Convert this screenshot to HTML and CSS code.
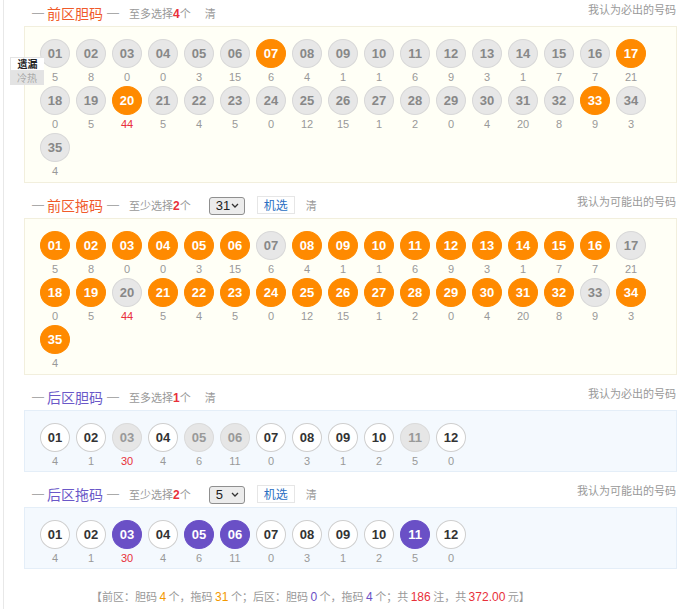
FILE: index.html
```html
<!DOCTYPE html>
<html lang="zh-CN">
<head>
<meta charset="utf-8">
<title>胆拖选号</title>
<link rel="stylesheet" href="styles.css">
</head>
<body>
<div class="page">
  <div class="mode-tabs">
    <div class="mode-tab active">遗漏</div>
    <div class="mode-tab">冷热</div>
  </div>

  <section class="zone">
    <div class="zone-head">
      <div class="zone-left">
        <span class="dash">—</span><span class="zone-title front">前区胆码</span><span class="dash">—</span>
        <span class="hint">至多选择<b>4</b>个</span>
        <span class="clear">清</span>
      </div>
      <div class="zone-note">我认为必出的号码</div>
    </div>
    <div class="box front-box">
      <div class="ball-grid">
        <div class="cell"><span class="ball gray">01</span><span class="miss">5</span></div>
        <div class="cell"><span class="ball gray">02</span><span class="miss">8</span></div>
        <div class="cell"><span class="ball gray">03</span><span class="miss">0</span></div>
        <div class="cell"><span class="ball gray">04</span><span class="miss">0</span></div>
        <div class="cell"><span class="ball gray">05</span><span class="miss">3</span></div>
        <div class="cell"><span class="ball gray">06</span><span class="miss">15</span></div>
        <div class="cell"><span class="ball orange">07</span><span class="miss">6</span></div>
        <div class="cell"><span class="ball gray">08</span><span class="miss">4</span></div>
        <div class="cell"><span class="ball gray">09</span><span class="miss">1</span></div>
        <div class="cell"><span class="ball gray">10</span><span class="miss">1</span></div>
        <div class="cell"><span class="ball gray">11</span><span class="miss">6</span></div>
        <div class="cell"><span class="ball gray">12</span><span class="miss">9</span></div>
        <div class="cell"><span class="ball gray">13</span><span class="miss">3</span></div>
        <div class="cell"><span class="ball gray">14</span><span class="miss">1</span></div>
        <div class="cell"><span class="ball gray">15</span><span class="miss">7</span></div>
        <div class="cell"><span class="ball gray">16</span><span class="miss">7</span></div>
        <div class="cell"><span class="ball orange">17</span><span class="miss">21</span></div>
        <div class="cell"><span class="ball gray">18</span><span class="miss">0</span></div>
        <div class="cell"><span class="ball gray">19</span><span class="miss">5</span></div>
        <div class="cell"><span class="ball orange">20</span><span class="miss hot">44</span></div>
        <div class="cell"><span class="ball gray">21</span><span class="miss">5</span></div>
        <div class="cell"><span class="ball gray">22</span><span class="miss">4</span></div>
        <div class="cell"><span class="ball gray">23</span><span class="miss">5</span></div>
        <div class="cell"><span class="ball gray">24</span><span class="miss">0</span></div>
        <div class="cell"><span class="ball gray">25</span><span class="miss">12</span></div>
        <div class="cell"><span class="ball gray">26</span><span class="miss">15</span></div>
        <div class="cell"><span class="ball gray">27</span><span class="miss">1</span></div>
        <div class="cell"><span class="ball gray">28</span><span class="miss">2</span></div>
        <div class="cell"><span class="ball gray">29</span><span class="miss">0</span></div>
        <div class="cell"><span class="ball gray">30</span><span class="miss">4</span></div>
        <div class="cell"><span class="ball gray">31</span><span class="miss">20</span></div>
        <div class="cell"><span class="ball gray">32</span><span class="miss">8</span></div>
        <div class="cell"><span class="ball orange">33</span><span class="miss">9</span></div>
        <div class="cell"><span class="ball gray">34</span><span class="miss">3</span></div>
        <div class="cell"><span class="ball gray">35</span><span class="miss">4</span></div>
      </div>
    </div>
  </section>

  <section class="zone">
    <div class="zone-head">
      <div class="zone-left">
        <span class="dash">—</span><span class="zone-title front">前区拖码</span><span class="dash">—</span>
        <span class="hint">至少选择<b>2</b>个</span>
        <span class="select-wrap">
          <select class="count-select"><option>31</option></select>
          <svg class="chev" width="8" height="5" viewBox="0 0 8 5"><path d="M1 1l3 3 3-3" fill="none" stroke="#333" stroke-width="1.3"/></svg>
        </span>
        <span class="pick-btn">机选</span>
        <span class="clear near">清</span>
      </div>
      <div class="zone-note">我认为可能出的号码</div>
    </div>
    <div class="box front-box">
      <div class="ball-grid">
        <div class="cell"><span class="ball orange">01</span><span class="miss">5</span></div>
        <div class="cell"><span class="ball orange">02</span><span class="miss">8</span></div>
        <div class="cell"><span class="ball orange">03</span><span class="miss">0</span></div>
        <div class="cell"><span class="ball orange">04</span><span class="miss">0</span></div>
        <div class="cell"><span class="ball orange">05</span><span class="miss">3</span></div>
        <div class="cell"><span class="ball orange">06</span><span class="miss">15</span></div>
        <div class="cell"><span class="ball gray">07</span><span class="miss">6</span></div>
        <div class="cell"><span class="ball orange">08</span><span class="miss">4</span></div>
        <div class="cell"><span class="ball orange">09</span><span class="miss">1</span></div>
        <div class="cell"><span class="ball orange">10</span><span class="miss">1</span></div>
        <div class="cell"><span class="ball orange">11</span><span class="miss">6</span></div>
        <div class="cell"><span class="ball orange">12</span><span class="miss">9</span></div>
        <div class="cell"><span class="ball orange">13</span><span class="miss">3</span></div>
        <div class="cell"><span class="ball orange">14</span><span class="miss">1</span></div>
        <div class="cell"><span class="ball orange">15</span><span class="miss">7</span></div>
        <div class="cell"><span class="ball orange">16</span><span class="miss">7</span></div>
        <div class="cell"><span class="ball gray">17</span><span class="miss">21</span></div>
        <div class="cell"><span class="ball orange">18</span><span class="miss">0</span></div>
        <div class="cell"><span class="ball orange">19</span><span class="miss">5</span></div>
        <div class="cell"><span class="ball gray">20</span><span class="miss hot">44</span></div>
        <div class="cell"><span class="ball orange">21</span><span class="miss">5</span></div>
        <div class="cell"><span class="ball orange">22</span><span class="miss">4</span></div>
        <div class="cell"><span class="ball orange">23</span><span class="miss">5</span></div>
        <div class="cell"><span class="ball orange">24</span><span class="miss">0</span></div>
        <div class="cell"><span class="ball orange">25</span><span class="miss">12</span></div>
        <div class="cell"><span class="ball orange">26</span><span class="miss">15</span></div>
        <div class="cell"><span class="ball orange">27</span><span class="miss">1</span></div>
        <div class="cell"><span class="ball orange">28</span><span class="miss">2</span></div>
        <div class="cell"><span class="ball orange">29</span><span class="miss">0</span></div>
        <div class="cell"><span class="ball orange">30</span><span class="miss">4</span></div>
        <div class="cell"><span class="ball orange">31</span><span class="miss">20</span></div>
        <div class="cell"><span class="ball orange">32</span><span class="miss">8</span></div>
        <div class="cell"><span class="ball gray">33</span><span class="miss">9</span></div>
        <div class="cell"><span class="ball orange">34</span><span class="miss">3</span></div>
        <div class="cell"><span class="ball orange">35</span><span class="miss">4</span></div>
      </div>
    </div>
  </section>

  <section class="zone">
    <div class="zone-head">
      <div class="zone-left">
        <span class="dash">—</span><span class="zone-title back">后区胆码</span><span class="dash">—</span>
        <span class="hint">至多选择<b>1</b>个</span>
        <span class="clear">清</span>
      </div>
      <div class="zone-note">我认为必出的号码</div>
    </div>
    <div class="box back-box">
      <div class="ball-grid">
        <div class="cell"><span class="ball white">01</span><span class="miss">4</span></div>
        <div class="cell"><span class="ball white">02</span><span class="miss">1</span></div>
        <div class="cell"><span class="ball dim">03</span><span class="miss hot">30</span></div>
        <div class="cell"><span class="ball white">04</span><span class="miss">4</span></div>
        <div class="cell"><span class="ball dim">05</span><span class="miss">6</span></div>
        <div class="cell"><span class="ball dim">06</span><span class="miss">11</span></div>
        <div class="cell"><span class="ball white">07</span><span class="miss">0</span></div>
        <div class="cell"><span class="ball white">08</span><span class="miss">3</span></div>
        <div class="cell"><span class="ball white">09</span><span class="miss">1</span></div>
        <div class="cell"><span class="ball white">10</span><span class="miss">2</span></div>
        <div class="cell"><span class="ball dim">11</span><span class="miss">5</span></div>
        <div class="cell"><span class="ball white">12</span><span class="miss">0</span></div>
      </div>
    </div>
  </section>

  <section class="zone">
    <div class="zone-head">
      <div class="zone-left">
        <span class="dash">—</span><span class="zone-title back">后区拖码</span><span class="dash">—</span>
        <span class="hint">至少选择<b>2</b>个</span>
        <span class="select-wrap">
          <select class="count-select"><option>5</option></select>
          <svg class="chev" width="8" height="5" viewBox="0 0 8 5"><path d="M1 1l3 3 3-3" fill="none" stroke="#333" stroke-width="1.3"/></svg>
        </span>
        <span class="pick-btn">机选</span>
        <span class="clear near">清</span>
      </div>
      <div class="zone-note">我认为可能出的号码</div>
    </div>
    <div class="box back-box">
      <div class="ball-grid">
        <div class="cell"><span class="ball white">01</span><span class="miss">4</span></div>
        <div class="cell"><span class="ball white">02</span><span class="miss">1</span></div>
        <div class="cell"><span class="ball purple">03</span><span class="miss hot">30</span></div>
        <div class="cell"><span class="ball white">04</span><span class="miss">4</span></div>
        <div class="cell"><span class="ball purple">05</span><span class="miss">6</span></div>
        <div class="cell"><span class="ball purple">06</span><span class="miss">11</span></div>
        <div class="cell"><span class="ball white">07</span><span class="miss">0</span></div>
        <div class="cell"><span class="ball white">08</span><span class="miss">3</span></div>
        <div class="cell"><span class="ball white">09</span><span class="miss">1</span></div>
        <div class="cell"><span class="ball white">10</span><span class="miss">2</span></div>
        <div class="cell"><span class="ball purple">11</span><span class="miss">5</span></div>
        <div class="cell"><span class="ball white">12</span><span class="miss">0</span></div>
      </div>
    </div>
  </section>

  <p class="summary">【前区：胆码 <em class="o">4</em> 个，拖码 <em class="o">31</em> 个；后区：胆码 <em class="p">0</em> 个，拖码 <em class="p">4</em> 个；共 <em class="r">186</em> 注，共 <em class="r">372.00</em> 元】</p>
</div>
</body>
</html>
```

FILE: styles.css
```css
* { box-sizing: border-box; }

html, body {
  margin: 0;
  padding: 0;
  background: #fff;
}

body {
  font-family: "Liberation Sans", "Noto Sans CJK SC", sans-serif;
  color: #333;
}

.page {
  position: relative;
  margin-left: 3px;
  border-left: 1px solid #e8e8e8;
  min-height: 609px;
  padding: 0 13px 0 20px;
}

.mode-tabs {
  position: absolute;
  left: 6px;
  top: 57px;
  width: 34px;
  z-index: 2;
}

.mode-tab {
  height: 14px;
  line-height: 14px;
  font-size: 10px;
  text-align: center;
  font-family: "Noto Sans CJK SC", sans-serif;
  color: #aaa;
  background: #e3e3e3;
  overflow: hidden;
}

.mode-tab.active {
  background: #fff;
  color: #222;
  font-weight: bold;
  border: 1px solid #e4e4e4;
  border-right: none;
  line-height: 12px;
}

.zone + .zone { margin-top: 9px; }

.zone-head {
  display: flex;
  justify-content: space-between;
  align-items: flex-start;
  height: 26px;
}

.zone-left {
  display: flex;
  align-items: center;
  height: 26px;
  padding-left: 8px;
}

.dash {
  font-size: 12px;
  color: #aaa;
  line-height: 26px;
}

.zone-title {
  font-family: "Noto Sans CJK SC", sans-serif;
  font-size: 14px;
  line-height: 26px;
  margin: 0 4px 0 3px;
}

.zone-title.front { color: #f05a2a; }
.zone-title.back { color: #6a58c8; }

.hint {
  font-family: "Noto Sans CJK SC", sans-serif;
  font-size: 11px;
  color: #999;
  margin-left: 10px;
}

.hint b {
  color: #e8303a;
  font-weight: bold;
  font-family: "Liberation Sans", sans-serif;
  font-size: 12px;
}

.clear {
  font-family: "Noto Sans CJK SC", sans-serif;
  font-size: 11px;
  color: #999;
  margin-left: 14px;
}

.clear.near { margin-left: 11px; }

.select-wrap {
  position: relative;
  display: inline-block;
  margin-left: 18px;
  height: 18px;
}

.count-select {
  appearance: none;
  -webkit-appearance: none;
  width: 36px;
  height: 18px;
  padding: 0 0 0 6px;
  margin: 0;
  border: 1px solid #8f8f8f;
  border-radius: 3px;
  background: #ececec;
  font-family: "Liberation Sans", sans-serif;
  font-size: 13px;
  color: #222;
  line-height: 16px;
}

.chev {
  position: absolute;
  right: 6px;
  top: 7px;
  pointer-events: none;
}

.pick-btn {
  margin-left: 12px;
  height: 18px;
  line-height: 16px;
  padding: 0 6px;
  border: 1px solid #e6e6e6;
  background: #fff;
  font-family: "Noto Sans CJK SC", sans-serif;
  font-size: 12px;
  color: #2a6fc2;
}

.zone-note {
  font-family: "Noto Sans CJK SC", sans-serif;
  font-size: 11px;
  color: #999;
  line-height: 18px;
  padding-right: 1px;
}

.box {
  border: 1px solid;
}

.front-box {
  background: #fffff6;
  border-color: #f2efdd;
  padding: 12px 10px 2px 15px;
}

.back-box {
  background: #f4f9fe;
  border-color: #e4eef8;
  padding: 12px 10px 1px 15px;
}

.ball-grid {
  display: grid;
  grid-template-columns: repeat(17, 30px);
  column-gap: 6px;
}

.cell {
  display: flex;
  flex-direction: column;
  align-items: center;
  height: 47px;
}

.ball {
  width: 30px;
  height: 30px;
  border-radius: 50%;
  border: 1px solid;
  display: flex;
  align-items: center;
  justify-content: center;
  font-family: "Liberation Sans", sans-serif;
  font-weight: bold;
  font-size: 13px;
}

.ball.gray {
  background: #e7e7e7;
  border-color: #d8d8d8;
  color: #888;
}

.ball.orange {
  background: #ff8a00;
  border-color: #ff8a00;
  color: #fff;
}

.ball.white {
  background: #fff;
  border-color: #cfcfcf;
  color: #333;
}

.ball.dim {
  background: #e6e6e6;
  border-color: #dadada;
  color: #999;
}

.ball.purple {
  background: #6a50c6;
  border-color: #6a50c6;
  color: #fff;
}

.miss {
  font-family: "Liberation Sans", sans-serif;
  font-size: 11px;
  line-height: 18px;
  color: #999;
}

.miss.hot { color: #e8303a; }

.summary {
  margin: 17px 0 0;
  padding-left: 67px;
  font-family: "Noto Sans CJK SC", sans-serif;
  font-size: 11px;
  line-height: 20px;
  color: #999;
}

.summary em {
  font-style: normal;
  font-family: "Liberation Sans", sans-serif;
  font-size: 12px;
}

.summary .o { color: #f39800; }
.summary .p { color: #6a50c6; }
.summary .r { color: #e8303a; }
```
